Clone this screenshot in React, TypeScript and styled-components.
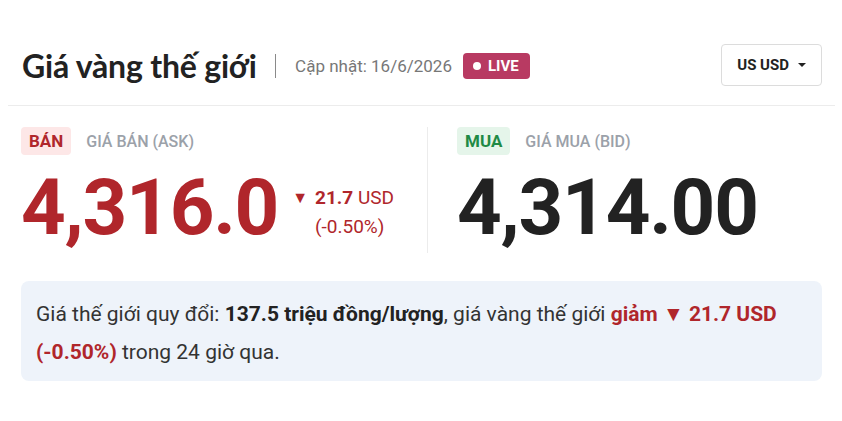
import React from "react";
import styled, {createGlobalStyle} from "styled-components";

const GlobalStyle = createGlobalStyle`
  html, body {
    margin: 0;
    padding: 0;
    background: #fff;
  }
  body {
    font-family: "Roboto", "Liberation Sans", sans-serif;
    color: #222;
  }
`;

const RED = "#b0262b";

const Page = styled.div`
  width: 842px;
  height: 421px;
  box-sizing: border-box;
  padding: 44px 20px 0 21px;
`;

const Header = styled.div`
  display: flex;
  align-items: center;
  margin: 0 -13px;
  padding: 0 13px 19px 14px;
  border-bottom: 1px solid #ececec;
`;

const Title = styled.h1`
  margin: 0;
  font-family: "Lato", "Roboto", sans-serif;
  font-size: 32px;
  font-weight: 700;
  color: #222;
  letter-spacing: -0.2px;
`;

const Bar = styled.span`
  width: 1.5px;
  height: 24px;
  background: #8a8a8a;
  margin: 2px 19px 0 18px;
`;

const Updated = styled.span`
  font-size: 17px;
  color: #777;
  margin-top: 2px;
`;

const LiveBadge = styled.span`
  display: inline-flex;
  align-items: center;
  gap: 7px;
  margin-left: 11px;
  margin-top: 2px;
  height: 26px;
  padding: 0 11px 0 10px;
  border-radius: 4px;
  background: #b83a62;
  color: #fff;
  font-size: 15px;
  font-weight: 700;

  &::before {
    content: "";
    width: 8px;
    height: 8px;
    border-radius: 50%;
    background: #fff;
  }
`;

const Currency = styled.button`
  margin-left: auto;
  display: flex;
  align-items: center;
  gap: 9px;
  height: 42px;
  padding: 0 15px;
  border: 1px solid #dcdcdc;
  border-radius: 4px;
  background: #fff;
  font-family: "Roboto", sans-serif;
  font-size: 15px;
  font-weight: 700;
  color: #222;
`;

const Caret = styled.span`
  width: 0;
  height: 0;
  border-left: 4px solid transparent;
  border-right: 4px solid transparent;
  border-top: 4px solid #222;
`;

const Prices = styled.div`
  display: grid;
  grid-template-columns: 406px 1fr;
  padding-top: 21px;
`;

const Column = styled.div<{ $divided?: boolean }>`
  padding-left: ${p => (p.$divided ? "29px" : "0")};
  border-left: ${p => (p.$divided ? "1px solid #ececec" : "none")};
`;

const LabelRow = styled.div`
  display: flex;
  align-items: center;
  gap: 15px;
`;

const Tag = styled.span<{ $tone: "sell" | "buy" }>`
  display: inline-flex;
  align-items: center;
  height: 28px;
  padding: 0 8px;
  border-radius: 4px;
  font-size: 17px;
  font-weight: 700;
  background: ${p => (p.$tone === "sell" ? "#fde7e7" : "#e5f5ea")};
  color: ${p => (p.$tone === "sell" ? RED : "#1f8a45")};
`;

const Label = styled.span`
  font-size: 16px;
  font-weight: 500;
  color: #9ba1a9;
`;

const PriceRow = styled.div`
  display: flex;
  align-items: center;
  gap: 14px;
  margin-top: 8px;
`;

const BigPrice = styled.div<{ $tone: "sell" | "buy" }>`
  font-family: "Roboto", sans-serif;
  font-size: 78px;
  font-weight: 700;
  line-height: 90px;
  letter-spacing: -1.2px;
  color: ${p => (p.$tone === "sell" ? RED : "#222")};
`;

const Change = styled.div`
  display: flex;
  align-items: flex-start;
  gap: 7px;
  font-size: 19px;
  line-height: 29px;
  color: ${RED};
  margin-top: 8px;
`;

const Arrow = styled.span`
  font-size: 16px;
  line-height: 29px;
`;

const ChangeLines = styled.div`
  display: flex;
  flex-direction: column;
`;

const Info = styled.div`
  margin-top: 28px;
  padding: 14px 15px 10px;
  border-radius: 8px;
  background: #eef3fa;
  font-size: 21px;
  line-height: 38px;
  color: #333;
`;

const Strong = styled.b<{ $red?: boolean }>`
  font-weight: 700;
  color: ${p => (p.$red ? RED : "#222")};
`;

export default function App() {
    return (
        <>
            <GlobalStyle/>
            <Page>
                <Header>
                    <Title>Giá vàng thế giới</Title>
                    <Bar/>
                    <Updated>Cập nhật: 16/6/2026</Updated>
                    <LiveBadge>LIVE</LiveBadge>
                    <Currency>
                        US USD <Caret/>
                    </Currency>
                </Header>
                <Prices>
                    <Column>
                        <LabelRow>
                            <Tag $tone="sell">BÁN</Tag>
                            <Label>GIÁ BÁN (ASK)</Label>
                        </LabelRow>
                        <PriceRow>
                            <BigPrice $tone="sell">4,316.0</BigPrice>
                            <Change>
                                <Arrow>▼</Arrow>
                                <ChangeLines>
                                    <span><b>21.7</b> USD</span>
                                    <span>(-0.50%)</span>
                                </ChangeLines>
                            </Change>
                        </PriceRow>
                    </Column>
                    <Column $divided>
                        <LabelRow>
                            <Tag $tone="buy">MUA</Tag>
                            <Label>GIÁ MUA (BID)</Label>
                        </LabelRow>
                        <PriceRow>
                            <BigPrice $tone="buy">4,314.00</BigPrice>
                        </PriceRow>
                    </Column>
                </Prices>
                <Info>
                    Giá thế giới quy đổi: <Strong>137.5 triệu đồng/lượng</Strong>, giá vàng thế giới{" "}
                    <Strong $red>giảm ▼ 21.7 USD (-0.50%)</Strong> trong 24 giờ qua.
                </Info>
            </Page>
        </>
    );
}
